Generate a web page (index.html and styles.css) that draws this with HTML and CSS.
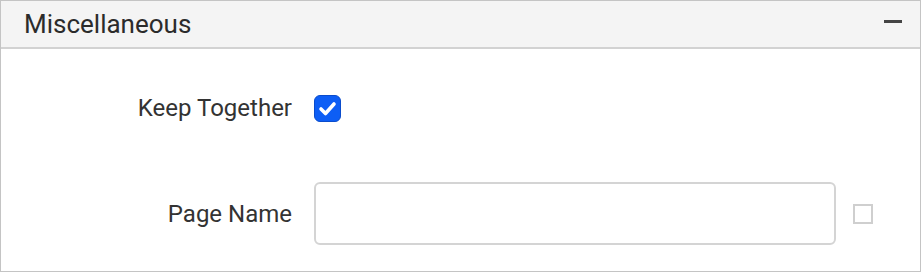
FILE: index.html
```html
<!DOCTYPE html>
<html lang="en">
<head>
  <meta charset="UTF-8">
  <title>Miscellaneous</title>
  <link rel="stylesheet" href="styles.css">
</head>
<body>
  <div class="panel">
    <div class="panel-header">
      <span class="panel-title">Miscellaneous</span>
      <span class="collapse-icon"></span>
    </div>
    <div class="panel-body">
      <div class="row">
        <label class="row-label">Keep Together</label>
        <span class="check checked">
          <svg width="27" height="27" viewBox="0 0 27 27">
            <path d="M7 14 L11.5 18.5 L20 9" fill="none" stroke="#fff" stroke-width="3.6" stroke-linecap="round" stroke-linejoin="round"/>
          </svg>
        </span>
      </div>
      <div class="row">
        <label class="row-label">Page Name</label>
        <input type="text" class="text-input">
        <span class="check small"></span>
      </div>
    </div>
  </div>
</body>
</html>
```

FILE: styles.css
```css
body {
  margin: 0;
  font-family: Roboto, "Liberation Sans", sans-serif;
  color: #333;
  background: #fff;
}

.panel {
  width: 919px;
  height: 270px;
  border: 1px solid #c4c4c4;
}

/* header strip */
.panel-header {
  height: 46px;
  background-color: #f4f4f4;
  border-bottom: 2px solid #d2d2d2;
  display: flex;
  align-items: center;
  justify-content: space-between;
  padding: 0 18px 0 23px;
}

.panel-title {
  font-size: 26px;
  color: #2b2b2b;
}

.collapse-icon {
  width: 18px;
  height: 3px;
  background-color: #444;
  margin-bottom: 5px;
}

.panel-body {
  padding-top: 45px;
  display: flex;
  flex-direction: column;
  gap: 60px;
}

.row {
  display: flex;
  align-items: center;
}

.row-label {
  width: 313px;
  flex-shrink: 0;
  text-align: right;
  font-size: 24px;
  color: #333;
  padding-right: 22px;
  box-sizing: border-box;
}

.check {
  display: inline-block;
  box-sizing: border-box;
}

.check.checked {
  width: 27px;
  height: 27px;
  background-color: #0d5ef5;
  border: 1px solid #0a4ccc;
  border-radius: 6px;
}

.check.checked svg {
  display: block;
  margin: -1px;
}

.text-input {
  width: 522px;
  height: 63px;
  box-sizing: border-box;
  border: 2px solid #d4d4d4;
  border-radius: 6px;
  padding: 0 12px;
  font-size: 18px;
  outline: none;
}

.check.small {
  width: 20px;
  height: 20px;
  border: 2px solid #cfcfcf;
  margin-left: 17px;
}
```
